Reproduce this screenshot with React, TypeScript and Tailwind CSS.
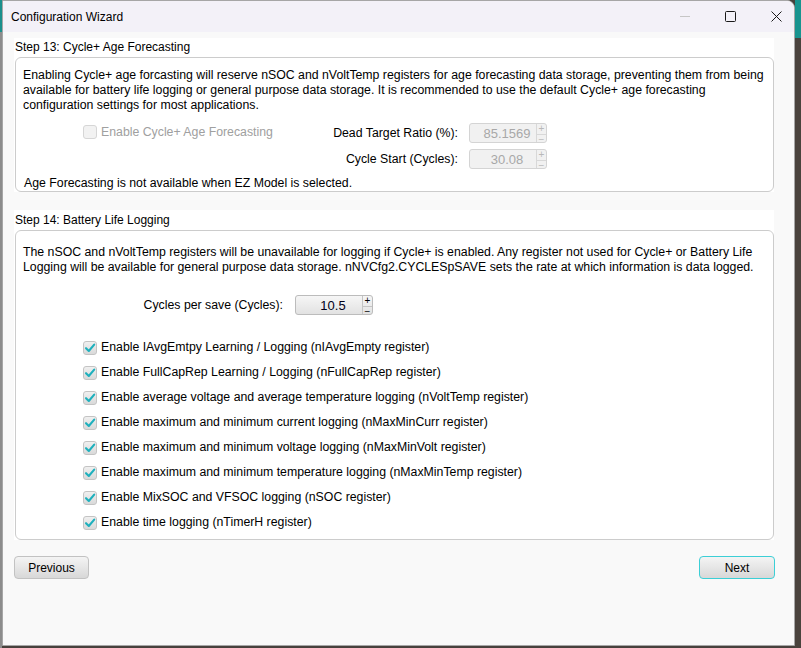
import React from "react";

const font = { fontFamily: '"Liberation Sans", Arial, sans-serif' };

function Check({ checked, disabled }: { checked?: boolean; disabled?: boolean }) {
  return (
    <div
      className={
        "w-[14px] h-[14px] rounded-[3px] border flex items-center justify-center shrink-0 " +
        (disabled
          ? "border-[#d6d6d6] bg-[#f2f2f2]"
          : "border-[#c4c4c4] bg-gradient-to-b from-[#f0f0f0] to-[#d9d9d9]")
      }
    >
      {checked && (
        <svg width="12" height="12" viewBox="0 0 12 12" fill="none">
          <path d="M2 6.2 L4.8 9 L10.2 2.6" stroke="#1fb0bd" strokeWidth="2.1" strokeLinecap="round" strokeLinejoin="round" />
        </svg>
      )}
    </div>
  );
}

function Spinner({ value, disabled }: { value: string; disabled?: boolean }) {
  return (
    <div
      className={
        "w-[78px] h-[20px] rounded-[3px] border flex " +
        (disabled
          ? "border-[#d4d4d4] bg-[#f1f1f1]"
          : "border-[#bcbcbc] bg-gradient-to-b from-[#f6f6f6] to-[#e2e2e2]")
      }
    >
      <div
        className={
          "flex-1 flex items-center justify-center pl-[8px] text-[13px] " +
          (disabled ? "text-[#a8a8a8]" : "text-[#000018]")
        }
      >
        {value}
      </div>
      <div className={"w-[10px] flex flex-col border-l " + (disabled ? "border-[#d8d8d8]" : "border-[#c4c4c4]")}>
        <div
          className={
            "flex-1 flex items-center justify-center text-[10px] leading-none border-b " +
            (disabled ? "text-[#b8b8b8] border-[#d8d8d8]" : "text-black border-[#c4c4c4]")
          }
        >
          +
        </div>
        <div
          className={
            "flex-1 flex items-center justify-center text-[10px] leading-none " +
            (disabled ? "text-[#b8b8b8]" : "text-black")
          }
        >
          −
        </div>
      </div>
    </div>
  );
}

const logItems = [
  "Enable IAvgEmtpy Learning / Logging (nIAvgEmpty register)",
  "Enable FullCapRep Learning / Logging (nFullCapRep register)",
  "Enable average voltage and average temperature logging (nVoltTemp register)",
  "Enable maximum and minimum current logging (nMaxMinCurr register)",
  "Enable maximum and minimum voltage logging (nMaxMinVolt register)",
  "Enable maximum and minimum temperature logging (nMaxMinTemp register)",
  "Enable MixSOC and VFSOC logging (nSOC register)",
  "Enable time logging (nTimerH register)",
];

export default function App() {
  return (
    <div className="w-[801px] h-[648px] flex bg-[#47413c] overflow-hidden" style={font}>
      {/* desktop strip left */}
      <div className="w-[2px] flex flex-col">
        <div className="h-[32px] bg-[#1a8f8c]" />
        <div className="flex-1 bg-[#8c8c8c]" />
      </div>

      {/* window */}
      <div className="w-[793px] h-[646px] border border-[#a6a6a6] rounded-tr-[8px] flex flex-col bg-[#f9f9f9] overflow-hidden">
        {/* title bar */}
        <div className="h-[31px] bg-[#f3f1f8] flex items-center shrink-0">
          <div className="pl-[8px] text-[12px] text-black flex-1">Configuration Wizard</div>
          <div className="w-[10px] h-px bg-[#c6c6c6] mr-[35px]" />
          <svg width="11" height="11" viewBox="0 0 11 11" className="mr-[35px]">
            <rect x="0.5" y="0.5" width="10" height="10" rx="1" fill="none" stroke="#1a1a1a" strokeWidth="1" />
          </svg>
          <svg width="11" height="11" viewBox="0 0 11 11" className="mr-[12px]">
            <path d="M0.5 0.5 L10.5 10.5 M10.5 0.5 L0.5 10.5" stroke="#1a1a1a" strokeWidth="1" />
          </svg>
        </div>

        {/* content */}
        <div className="flex-1 pl-[11px] pt-[6px] text-[12.3px] text-black">
          {/* Step 13 */}
          <div className="w-[760px] bg-white">
            <div className="h-[19px] pl-[1px] leading-[19px] text-[12px]">Step 13: Cycle+ Age Forecasting</div>
            <div className="ml-[1px] w-[759px] h-[135px] border border-[#cccccc] rounded-[6px] pl-[7px] pt-[10px] leading-[15px]">
              <p className="whitespace-nowrap">
                Enabling Cycle+ age forcasting will reserve nSOC and nVoltTemp registers for age forecasting data storage, preventing them from being
                <br />
                available for battery life logging or general purpose data storage. It is recommended to use the default Cycle+ age forecasting
                <br />
                configuration settings for most applications.
              </p>
              <div className="flex mt-[10px]">
                <div className="w-[294px] flex items-start pl-[60px] pt-[2px]">
                  <Check disabled />
                  <span className="ml-[4px] text-[#a0a0a0] leading-[15px]">Enable Cycle+ Age Forecasting</span>
                </div>
                <div className="flex flex-col gap-[6px]">
                  <div className="flex items-center">
                    <div className="w-[141px] text-right">Dead Target Ratio (%):</div>
                    <div className="ml-[11px]">
                      <Spinner value="85.1569" disabled />
                    </div>
                  </div>
                  <div className="flex items-center">
                    <div className="w-[141px] text-right">Cycle Start (Cycles):</div>
                    <div className="ml-[11px]">
                      <Spinner value="30.08" disabled />
                    </div>
                  </div>
                </div>
              </div>
              <p className="mt-[7px] pl-[1px]">Age Forecasting is not available when EZ Model is selected.</p>
            </div>
          </div>

          {/* Step 14 */}
          <div className="w-[760px] bg-white mt-[18px]">
            <div className="h-[20px] pl-[1px] leading-[21px] text-[12px]">Step 14: Battery Life Logging</div>
            <div className="ml-[1px] w-[759px] h-[310px] border border-[#cccccc] rounded-[6px] pl-[7px] pt-[14px] leading-[15px]">
              <p className="whitespace-nowrap">
                The nSOC and nVoltTemp registers will be unavailable for logging if Cycle+ is enabled. Any register not used for Cycle+ or Battery Life
                <br />
                Logging will be available for general purpose data storage. nNVCfg2.CYCLESpSAVE sets the rate at which information is data logged.
              </p>
              <div className="flex items-center mt-[20px]">
                <div className="w-[260px] text-right">Cycles per save (Cycles):</div>
                <div className="ml-[12px]">
                  <Spinner value="10.5" />
                </div>
              </div>
              <div className="flex flex-col mt-[20px] pl-[60px]">
                {logItems.map((t) => (
                  <div key={t} className="h-[25px] flex items-center">
                    <Check checked />
                    <span className="ml-[4px]">{t}</span>
                  </div>
                ))}
              </div>
            </div>
          </div>

          {/* buttons */}
          <div className="w-[761px] flex justify-between mt-[16px]">
            <button className="w-[75px] h-[23px] rounded-[4px] border border-[#c2c2c2] bg-gradient-to-b from-[#f4f4f4] to-[#d8d8d8] text-[12px] text-black">
              Previous
            </button>
            <button className="w-[76px] h-[23px] rounded-[4px] border border-[#3ccfd6] bg-gradient-to-b from-[#f4f4f4] to-[#d8d8d8] text-[12px] text-black">
              Next
            </button>
          </div>
        </div>
      </div>

      {/* desktop strip right */}
      <div className="w-[6px] flex flex-col">
        <div className="h-[38px] bg-[#18948f]" />
        <div className="flex-1 bg-[#4a433d]" />
      </div>
    </div>
  );
}
